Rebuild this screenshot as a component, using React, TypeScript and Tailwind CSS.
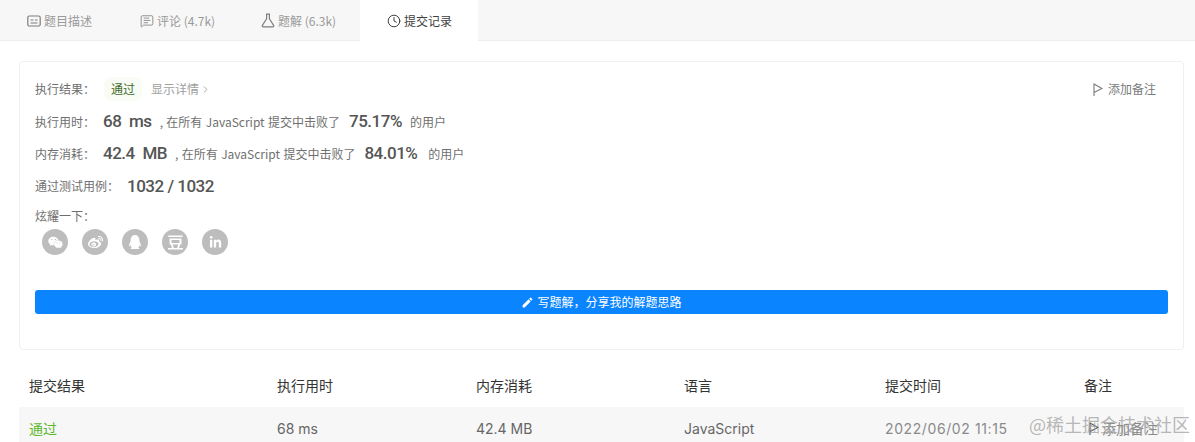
import { FaWeixin, FaWeibo, FaQq, FaLinkedinIn } from "react-icons/fa";
import { SiDouban } from "react-icons/si";
import { MdEdit } from "react-icons/md";
import { Clock, MessageSquareText, ChevronRight } from "lucide-react";

const font = { fontFamily: '"Noto Sans CJK SC", sans-serif' };

function CaptionIcon() {
  return (
    <svg width="14" height="14" viewBox="0 0 14 14" fill="none" stroke="currentColor" strokeWidth="1.2">
      <rect x="0.8" y="2" width="12.4" height="10" rx="1.5" />
      <path d="M3.5 6h3M8 6h2.5M3.5 9h7" />
    </svg>
  );
}

function FlaskIcon() {
  return (
    <svg width="14" height="15" viewBox="0 0 14 15" fill="none" stroke="currentColor" strokeWidth="1.2" strokeLinejoin="round">
      <path d="M5 1.2h4M5.6 1.2v4.6L1.4 12.4c-.4.7 0 1.4.8 1.4h9.6c.8 0 1.2-.7.8-1.4L8.4 5.8V1.2" />
    </svg>
  );
}

function Flag({ className }: { className?: string }) {
  return (
    <svg width="10" height="13" viewBox="0 0 10 13" fill="none" stroke="currentColor" strokeWidth="1.1" className={className}>
      <path d="M1 13V1l8 4.5L1 9.5" />
    </svg>
  );
}

function Tab({ icon, label, active, width }: { icon: React.ReactNode; label: string; active?: boolean; width: string }) {
  return (
    <div
      className={`flex h-[41px] items-center gap-[3px] text-[12px] ${width} ${
        active ? "bg-white text-[#3f3f3f]" : "text-[#9a9a9a]"
      }`}
    >
      <span className={active ? "text-[#333]" : "text-[#7d7d7d]"}>{icon}</span>
      <span>{label}</span>
    </div>
  );
}

function Stat({ children, wide }: { children: React.ReactNode; wide?: boolean }) {
  return (
    <span
      className={`font-['Roboto',sans-serif] text-[17px] font-medium tracking-[-0.5px] text-[#555] ${
        wide ? "[word-spacing:4px]" : ""
      }`}
    >
      {children}
    </span>
  );
}

function Label({ children }: { children: React.ReactNode }) {
  return <span className="text-[12px] text-[#6f6f6f]">{children}</span>;
}

const shareIcons = [
  <FaWeixin size={15} />,
  <FaWeibo size={15} />,
  <FaQq size={14} />,
  <SiDouban size={15} />,
  <FaLinkedinIn size={13} />,
];

const columns = "grid grid-cols-[248px_199px_208px_201px_199px_1fr] items-center px-[10px] text-[14px]";
const latin = "font-['Inter',sans-serif]";

export default function App() {
  return (
    <div className="relative h-[442px] w-[1195px] overflow-hidden bg-white" style={font}>
      {/* Tabs */}
      <div className="flex h-[41px] items-start border-b border-[#eeeeee] bg-[#f7f7f7]">
        <Tab width="w-[120px] pl-[27px]" icon={<CaptionIcon />} label="题目描述" />
        <Tab width="w-[120px] pl-[20px]" icon={<MessageSquareText size={14} strokeWidth={1.4} />} label="评论 (4.7k)" />
        <Tab width="w-[120px] pl-[21px]" icon={<FlaskIcon />} label="题解 (6.3k)" />
        <Tab width="w-[118px] pl-[27px]" active icon={<Clock size={14} strokeWidth={1.6} />} label="提交记录" />
      </div>

      {/* Result card */}
      <div className="mx-[19px] mt-[20px] h-[289px] w-[1165px] rounded-[4px] border border-[#f0f0f0] px-[15px] pt-[15px]">
        <div className="flex h-[24px] items-center">
          <Label>执行结果：</Label>
          <span className="ml-[9px] flex h-[24px] w-[38px] items-center justify-center rounded-[8px] bg-[#f8fcf5] text-[12px] text-[#3f6b2c]">
            通过
          </span>
          <span className="ml-[9px] flex items-center text-[12px] text-[#a0a0a0]">
            显示详情
            <ChevronRight size={11} strokeWidth={2} className="ml-[1px]" />
          </span>
          <span className="ml-auto mr-[12px] flex items-center gap-[5px] text-[12px] text-[#7a7a7a]">
            <Flag />
            添加备注
          </span>
        </div>

        <div className="mt-[9px] flex h-[24px] items-center text-[12px] text-[#6f6f6f]">
          <Label>执行用时：</Label>
          <span className="ml-[8px]"><Stat wide>68 ms</Stat></span>
          <span className="ml-[8px] [word-spacing:0.7px]">, 在所有 JavaScript 提交中击败了</span>
          <span className="ml-[9px]"><Stat>75.17%</Stat></span>
          <span className="ml-[8px]">的用户</span>
        </div>

        <div className="mt-[8px] flex h-[24px] items-center text-[12px] text-[#6f6f6f]">
          <Label>内存消耗：</Label>
          <span className="ml-[8px]"><Stat wide>42.4 MB</Stat></span>
          <span className="ml-[8px] [word-spacing:0.7px]">, 在所有 JavaScript 提交中击败了</span>
          <span className="ml-[9px]"><Stat>84.01%</Stat></span>
          <span className="ml-[11px]">的用户</span>
        </div>

        <div className="mt-[8px] flex h-[24px] items-center">
          <Label>通过测试用例：</Label>
          <span className="ml-[8px]"><Stat>1032 / 1032</Stat></span>
        </div>

        <div className="mt-[8px] flex h-[20px] items-center">
          <Label>炫耀一下：</Label>
        </div>

        <div className="mt-[3px] flex gap-[14px] pl-[7px]">
          {shareIcons.map((icon, i) => (
            <span key={i} className="flex h-[26px] w-[26px] items-center justify-center rounded-full bg-[#bdbdbd] text-white">
              {icon}
            </span>
          ))}
        </div>

        <div className="mt-[35px] flex h-[24px] items-center justify-center gap-[3px] rounded-[3px] bg-[#0a84ff] text-[12px] text-white">
          <MdEdit size={13} />
          写题解，分享我的解题思路
        </div>
      </div>

      {/* Submissions table */}
      <div className="mx-[19px] mt-[14px] w-[1165px]">
        <div className={`${columns} h-[43px] text-[#333]`}>
          <span>提交结果</span>
          <span>执行用时</span>
          <span>内存消耗</span>
          <span>语言</span>
          <span>提交时间</span>
          <span>备注</span>
        </div>
        <div className={`${columns} h-[43px] bg-[#f7f7f7] text-[#666]`}>
          <span className="text-[#5cb82c]">通过</span>
          <span className={latin}>68 ms</span>
          <span className={latin}>42.4 MB</span>
          <span className={latin}>JavaScript</span>
          <span className={`${latin} tracking-[0.6px] text-[#8a8a8a]`}>2022/06/02 11:15</span>
          <span className="flex items-center gap-[3px] pl-[5px] text-[#8a8a8a]">
            <Flag className="text-[#555]" />
            添加备注
          </span>
        </div>
      </div>

      {/* Watermark */}
      <span className="absolute left-[1029px] top-[411px] whitespace-nowrap text-[18px] text-[#9a9a9a]/70">
        @稀土掘金技术社区
      </span>
    </div>
  );
}
